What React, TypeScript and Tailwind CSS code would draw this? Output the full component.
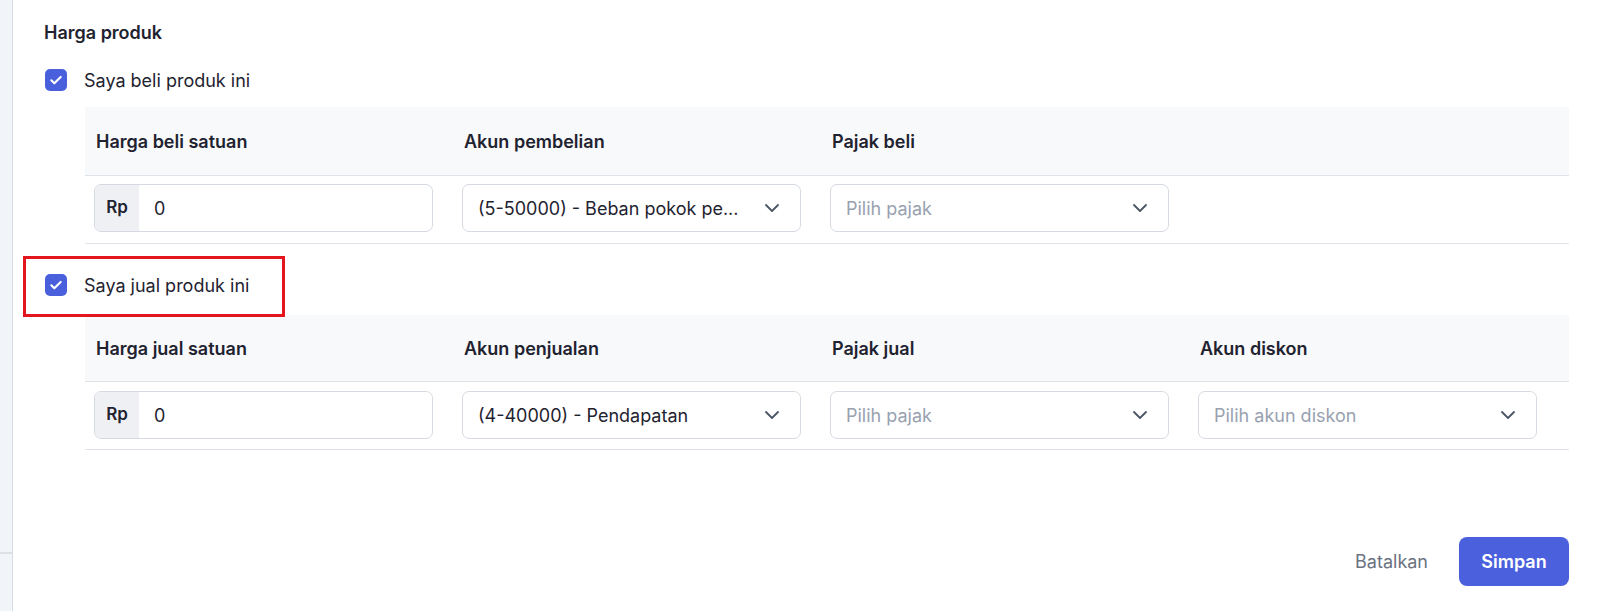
import React from "react";

function Check() {
  return (
    <div className="w-[22px] h-[22px] rounded-[5px] bg-[#4a5fdc] flex items-center justify-center shrink-0">
      <svg width="16" height="16" viewBox="0 0 24 24" fill="none" stroke="white" strokeWidth="3.2" strokeLinecap="round" strokeLinejoin="round">
        <path d="M5 12.5l4.5 4.5L19 7.5" />
      </svg>
    </div>
  );
}

function Chevron() {
  return (
    <svg width="24" height="24" viewBox="0 0 24 24" fill="none" stroke="#4b5563" strokeWidth="1.8" strokeLinecap="round" strokeLinejoin="round">
      <path d="M6 9l6 6 6-6" />
    </svg>
  );
}

function RpInput() {
  return (
    <div className="w-[339px] h-[48px] border border-[#d5dae2] rounded-[7px] flex overflow-hidden bg-white">
      <div className="w-[44px] h-full bg-[#eef0f4] flex items-center justify-center text-[17px] font-semibold text-[#1f2330]">Rp</div>
      <div className="flex items-center pl-[15px] text-[18px] text-[#1f2330]">0</div>
    </div>
  );
}

function Select({ text, placeholder }: { text: string; placeholder?: boolean }) {
  return (
    <div className="w-[339px] h-[48px] border border-[#d5dae2] rounded-[7px] flex items-center justify-between pl-[15px] pr-[16px] bg-white">
      <span className={placeholder ? "text-[18px] text-[#98a1b0]" : "text-[18px] text-[#1f2330]"}>{text}</span>
      <Chevron />
    </div>
  );
}

function Cell({ children }: { children?: React.ReactNode }) {
  return <div className="w-[368px] shrink-0 pl-[9px]">{children}</div>;
}

function HeadCell({ children }: { children?: React.ReactNode }) {
  return <div className="w-[368px] shrink-0 pl-[11px] text-[18px] font-semibold text-[#1f2330]">{children}</div>;
}

export default function App() {
  return (
    <div className="flex h-[611px] w-[1600px] bg-white overflow-hidden" style={{ fontFamily: "Inter, 'Noto Sans', sans-serif" }}>
      <div className="w-[13px] shrink-0 bg-[#f1f4f9] border-r border-[#d5dbe3] flex flex-col">
        <div className="h-[552px]" />
        <div className="h-[2px] bg-[#dde1e6]" />
      </div>
      <div className="flex-1 pl-[31px] pr-[31px]">
        <div className="pt-[21px] text-[18px] leading-[24px] font-semibold text-[#1f2330]">Harga produk</div>

        <div className="mt-[23px] flex items-center gap-[17px] h-[24px] pl-[1px]">
          <Check />
          <span className="text-[18px] text-[#1f2330]">Saya beli produk ini</span>
        </div>

        <div className="mt-[15px] ml-[41px]">
          <div className="h-[69px] bg-[#f8f9fb] border-b border-[#dfe3ea] flex items-center">
            <HeadCell>Harga beli satuan</HeadCell>
            <HeadCell>Akun pembelian</HeadCell>
            <HeadCell>Pajak beli</HeadCell>
          </div>
          <div className="h-[68px] border-b border-[#dfe3ea] flex items-start pt-[8px]">
            <Cell><RpInput /></Cell>
            <Cell><Select text="(5-50000) - Beban pokok pe..." /></Cell>
            <Cell><Select text="Pilih pajak" placeholder /></Cell>
          </div>
        </div>

        <div className="relative mt-[29px] flex items-center gap-[17px] h-[24px] pl-[1px]">
          <Check />
          <span className="text-[18px] text-[#1f2330]">Saya jual produk ini</span>
          <div className="absolute left-[-21px] top-[-17px] w-[262px] h-[61px] border-[3px] border-[#e3161f] pointer-events-none" />
        </div>

        <div className="mt-[18px] ml-[41px]">
          <div className="h-[67px] bg-[#f8f9fb] border-b border-[#dfe3ea] flex items-center">
            <HeadCell>Harga jual satuan</HeadCell>
            <HeadCell>Akun penjualan</HeadCell>
            <HeadCell>Pajak jual</HeadCell>
            <HeadCell>Akun diskon</HeadCell>
          </div>
          <div className="h-[68px] border-b border-[#dfe3ea] flex items-start pt-[9px]">
            <Cell><RpInput /></Cell>
            <Cell><Select text="(4-40000) - Pendapatan" /></Cell>
            <Cell><Select text="Pilih pajak" placeholder /></Cell>
            <Cell><Select text="Pilih akun diskon" placeholder /></Cell>
          </div>
        </div>

        <div className="mt-[87px] flex justify-end items-center gap-[15px]">
          <button className="h-[49px] px-[16px] text-[18px] text-[#6b7280]">Batalkan</button>
          <button className="w-[110px] h-[49px] rounded-[8px] bg-[#4b60dd] text-white text-[18px] font-semibold">Simpan</button>
        </div>
      </div>
    </div>
  );
}
